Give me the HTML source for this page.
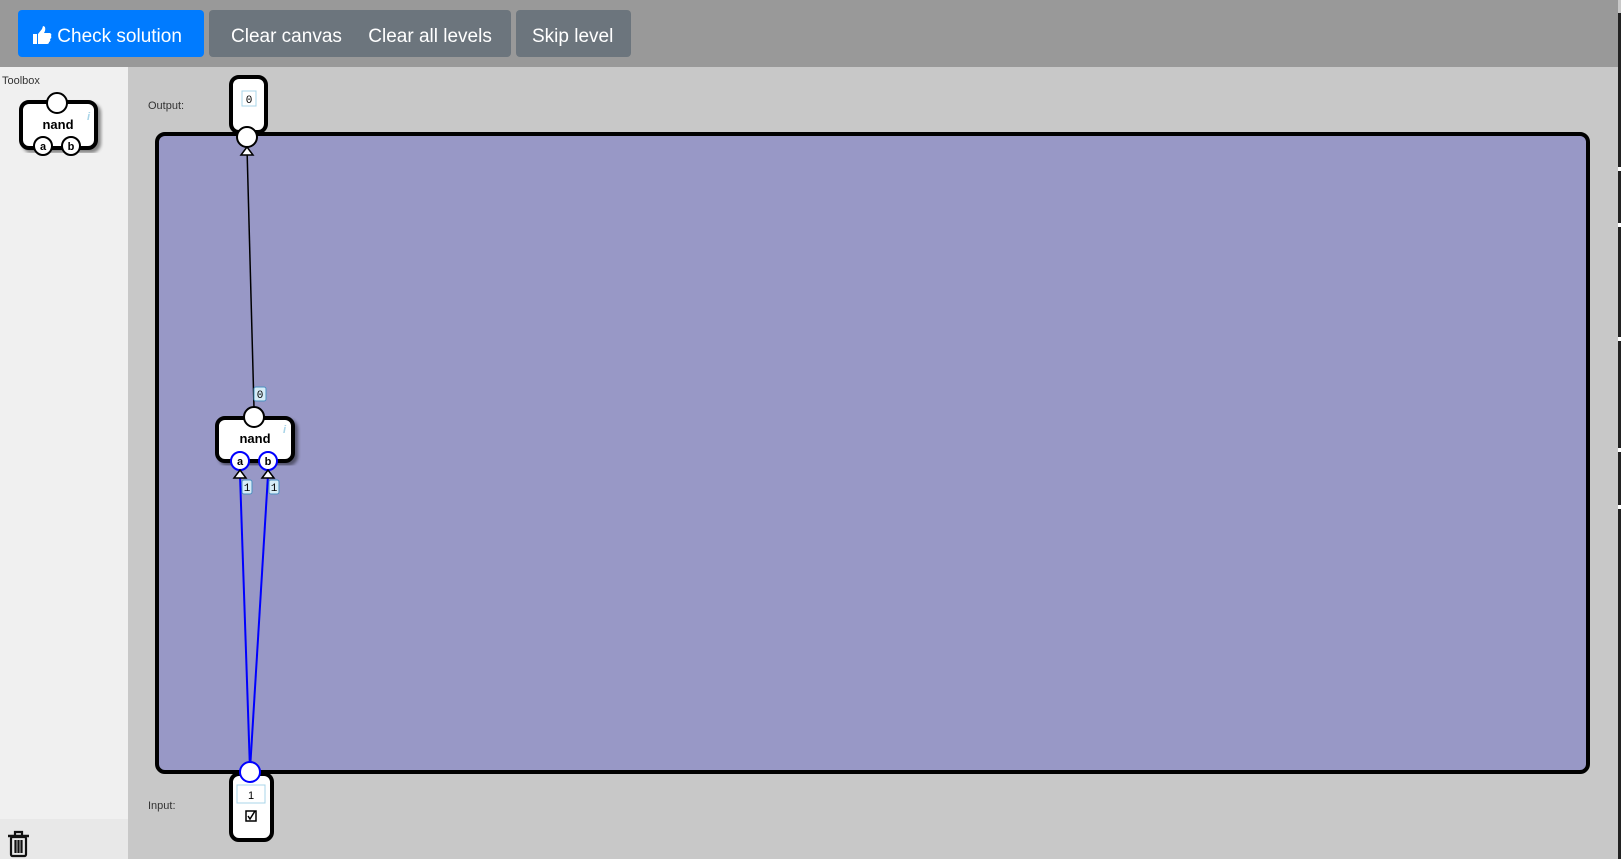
<!DOCTYPE html>
<html><head><meta charset="utf-8"><style>
*{box-sizing:border-box}
body{margin:0;width:1621px;height:859px;overflow:hidden;background:#c8c8c8;font-family:"Segoe UI","Liberation Sans",sans-serif;position:relative}
.top{position:absolute;left:0;top:0;width:1618px;height:67px;background:#999}
.btn{position:absolute;top:10px;height:47px;border-radius:4px;color:#fff;font-size:19px;line-height:53px}
.side{position:absolute;left:0;top:67px;width:128px;height:792px;background:#f0f0f0}
.side .bot{position:absolute;left:0;top:752px;width:128px;height:40px;background:#e8e8e8}
.rs{position:absolute;left:1618px;top:13px;width:3px;height:846px;background:#222}
.lbl{position:absolute;font-size:11px;color:#333}
</style></head><body>
<div class="top"></div>
<div class="btn" style="left:18px;width:186px;background:#007bff;padding-left:15px">
<svg width="19" height="18" viewBox="0 0 19 18" style="vertical-align:-2px"><rect x="0" y="8" width="4" height="10" fill="#fff"/><path d="M5 8 L9 3 L10 0 Q13 0 12 5 L11 7 L17 7 Q19 8 18 10 Q19 12 17 13 Q18 15 16 16 Q16 18 14 18 L5 18 Z" fill="#fff"/></svg> Check solution</div>
<div class="btn" style="left:209px;width:302px;background:#6c757d;padding-left:22px">Clear canvas&nbsp;&nbsp;&nbsp;&nbsp;&nbsp;Clear all levels</div>
<div class="btn" style="left:516px;width:115px;background:#6c757d;padding-left:16px">Skip level</div>
<div class="side"><div class="bot"></div></div>
<div class="lbl" style="left:2px;top:75px">Toolbox</div>
<div class="lbl" style="left:148px;top:100px">Output:</div>
<div class="lbl" style="left:148px;top:800px">Input:</div>
<div class="rs"></div>
<svg width="1621" height="859" style="position:absolute;left:0;top:0" font-family="Liberation Sans,sans-serif">
<defs><filter id="sh"><feDropShadow dx="3" dy="3" stdDeviation="1.5" flood-color="#000" flood-opacity="0.45"/></filter></defs>
<g transform="translate(8,831)" fill="none" stroke="#111" stroke-width="2.2"><rect x="3" y="6" width="15" height="19" rx="1.5"/><line x1="0" y1="5" x2="21" y2="5" stroke-width="2.5"/><path d="M7 4 V1 H14 V4"/><line x1="7.5" y1="9" x2="7.5" y2="22"/><line x1="10.5" y1="9" x2="10.5" y2="22"/><line x1="13.5" y1="9" x2="13.5" y2="22"/></g>
<g filter="url(#sh)"><rect x="21" y="102" width="75" height="46" rx="8" fill="#fff" stroke="#000" stroke-width="4"/></g>
<text x="58" y="129" font-size="13" font-weight="bold" text-anchor="middle">nand</text>
<text x="87" y="120" font-size="11" fill="#a8d4e8" font-style="italic" font-weight="bold">i</text>
<circle cx="57" cy="103" r="10" fill="#fff" stroke="#000" stroke-width="2"/>
<circle cx="43" cy="146" r="9" fill="#fff" stroke="#000" stroke-width="2"/><text x="43" y="150" font-size="11" font-weight="bold" text-anchor="middle">a</text>
<circle cx="71" cy="146" r="9" fill="#fff" stroke="#000" stroke-width="2"/><text x="71" y="150" font-size="11" font-weight="bold" text-anchor="middle">b</text>
<rect x="157" y="134" width="1431" height="638" rx="8" fill="#9898c6" stroke="#000" stroke-width="4"/>
<rect x="231" y="77" width="35" height="55" rx="8" fill="#fff" stroke="#000" stroke-width="4"/>
<rect x="242" y="91" width="14" height="15" fill="#fff" stroke="#a8d4e8"/><text x="249" y="103" font-size="11" font-family="Liberation Mono,monospace" text-anchor="middle">0</text>
<line x1="247" y1="148" x2="254" y2="408" stroke="#000" stroke-width="1.5"/>
<line x1="250" y1="770" x2="240" y2="475" stroke="#0000ff" stroke-width="2"/>
<line x1="250" y1="770" x2="268" y2="475" stroke="#0000ff" stroke-width="2"/>
<circle cx="247" cy="137" r="10" fill="#fff" stroke="#000" stroke-width="2"/>
<path d="M241 155 L247 147 L253 155 Z" fill="#fff" stroke="#000" stroke-width="1.5"/>
<rect x="254" y="387" width="12" height="14" rx="2" fill="#d6ecf7" stroke="#4a8fc0"/><text x="260" y="398" font-size="11" font-family="Liberation Mono,monospace" text-anchor="middle">0</text>
<g filter="url(#sh)"><rect x="217" y="418" width="76" height="43" rx="8" fill="#fff" stroke="#000" stroke-width="4"/></g>
<text x="255" y="443" font-size="13" font-weight="bold" text-anchor="middle">nand</text>
<text x="283" y="433" font-size="11" fill="#a8d4e8" font-style="italic" font-weight="bold">i</text>
<circle cx="254" cy="417" r="10" fill="#fff" stroke="#000" stroke-width="2"/>
<circle cx="240" cy="461" r="9" fill="#fff" stroke="#0000ff" stroke-width="2"/><text x="240" y="465" font-size="11" font-weight="bold" text-anchor="middle">a</text>
<circle cx="268" cy="461" r="9" fill="#fff" stroke="#0000ff" stroke-width="2"/><text x="268" y="465" font-size="11" font-weight="bold" text-anchor="middle">b</text>
<path d="M234 478 L240 470 L246 478 Z" fill="#fff" stroke="#000" stroke-width="1.5"/>
<path d="M262 478 L268 470 L274 478 Z" fill="#fff" stroke="#000" stroke-width="1.5"/>
<rect x="242" y="480" width="10" height="14" rx="2" fill="#d6ecf7" stroke="#4a8fc0"/><text x="247" y="491" font-size="11" font-family="Liberation Mono,monospace" text-anchor="middle">1</text>
<rect x="269" y="480" width="10" height="14" rx="2" fill="#d6ecf7" stroke="#4a8fc0"/><text x="274" y="491" font-size="11" font-family="Liberation Mono,monospace" text-anchor="middle">1</text>
<rect x="231" y="774" width="41" height="66" rx="8" fill="#fff" stroke="#000" stroke-width="4"/>
<rect x="237" y="785" width="28" height="18" fill="#fff" stroke="#a8d4e8"/><text x="251" y="799" font-size="11" text-anchor="middle">1</text>
<rect x="246" y="811" width="10" height="10" fill="#fff" stroke="#000" stroke-width="1.5"/><path d="M248 816 L250 819 L255 811" fill="none" stroke="#000" stroke-width="1.5"/>
<circle cx="250" cy="772" r="10" fill="#fff" stroke="#0000ff" stroke-width="2"/>
<g fill="#fff"><rect x="1618" y="167" width="3" height="4"/><rect x="1618" y="223" width="3" height="4"/><rect x="1618" y="337" width="3" height="4"/><rect x="1618" y="448" width="3" height="4"/><rect x="1618" y="505" width="3" height="4"/></g>
</svg>
</body></html>
